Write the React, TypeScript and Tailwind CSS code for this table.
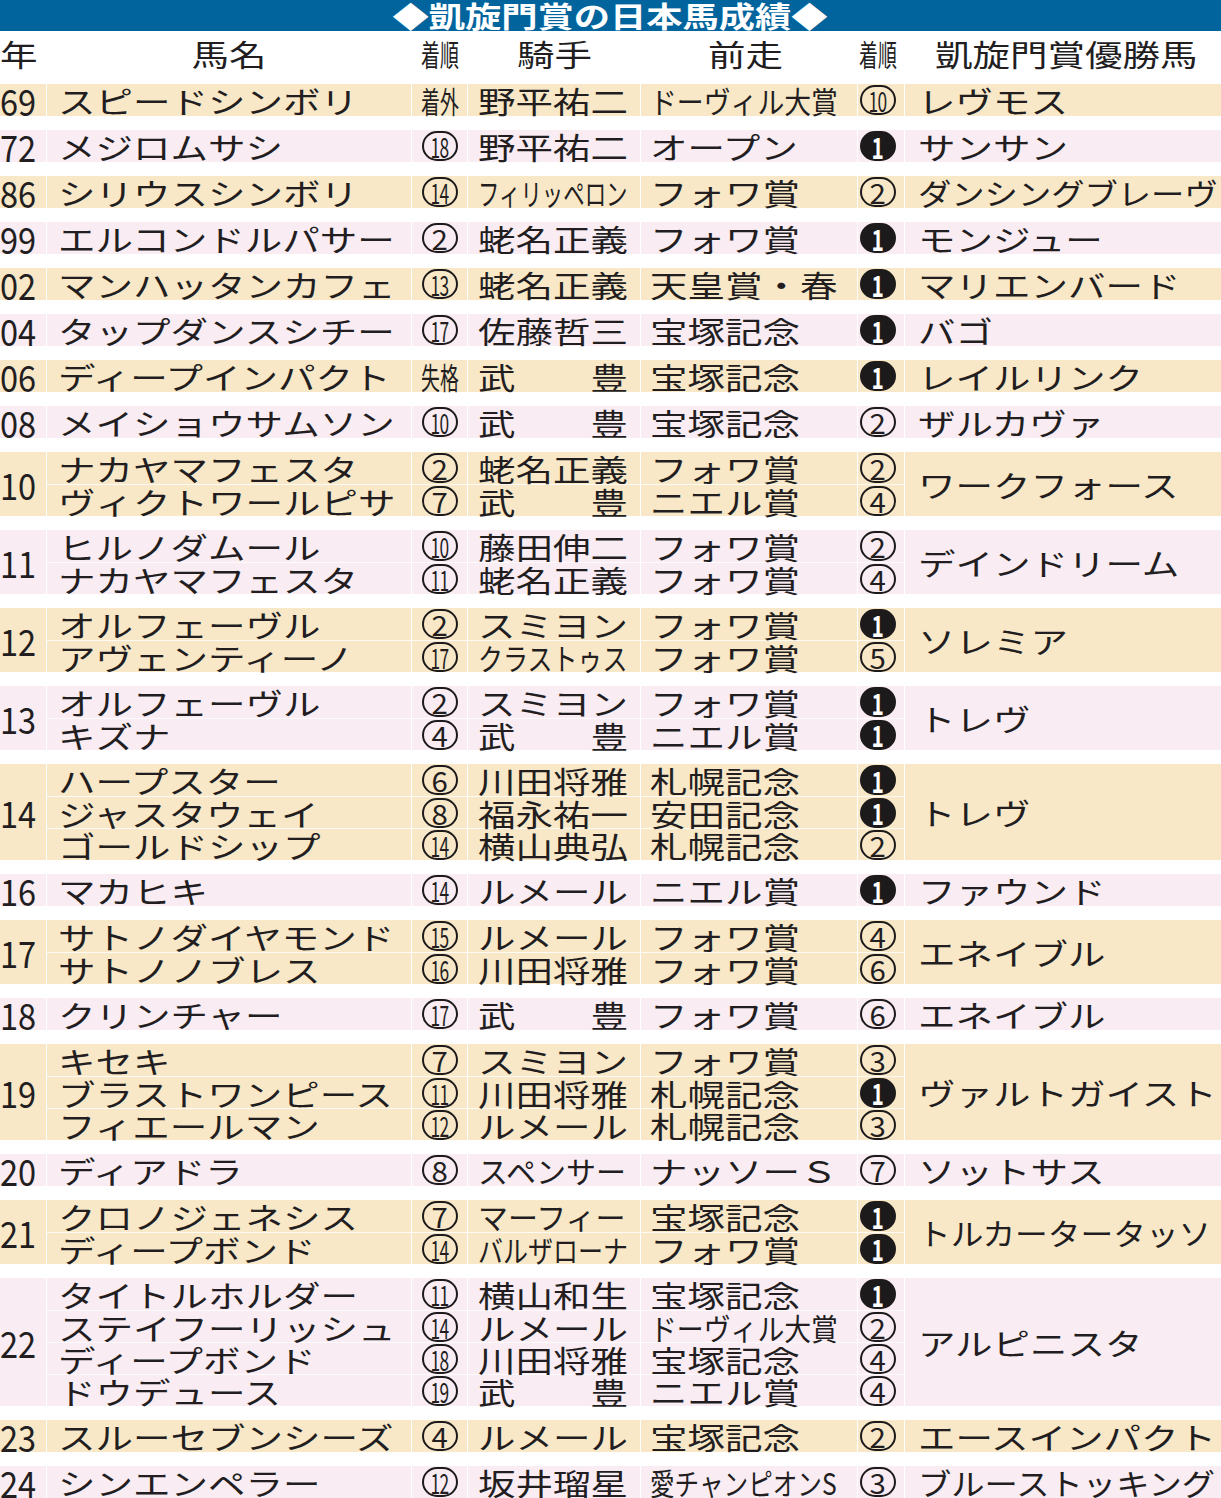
type Rank = number | 'b1' | string

interface Line {
  name: string
  rank: Rank
  jockey: string
  prev: string
  rank2: Rank
}

interface Row {
  year: string
  lines: Line[]
  winner: string
}

const l = (name: string, rank: Rank, jockey: string, prev: string, rank2: Rank): Line => ({
  name,
  rank,
  jockey,
  prev,
  rank2,
})

const ROWS: Row[] = [
  { year: '69', lines: [l('スピードシンボリ', '着外', '野平祐二', 'ドーヴィル大賞', 10)], winner: 'レヴモス' },
  { year: '72', lines: [l('メジロムサシ', 18, '野平祐二', 'オープン', 'b1')], winner: 'サンサン' },
  { year: '86', lines: [l('シリウスシンボリ', 14, 'フィリッペロン', 'フォワ賞', 2)], winner: 'ダンシングブレーヴ' },
  { year: '99', lines: [l('エルコンドルパサー', 2, '蛯名正義', 'フォワ賞', 'b1')], winner: 'モンジュー' },
  { year: '02', lines: [l('マンハッタンカフェ', 13, '蛯名正義', '天皇賞・春', 'b1')], winner: 'マリエンバード' },
  { year: '04', lines: [l('タップダンスシチー', 17, '佐藤哲三', '宝塚記念', 'b1')], winner: 'バゴ' },
  { year: '06', lines: [l('ディープインパクト', '失格', '武豊', '宝塚記念', 'b1')], winner: 'レイルリンク' },
  { year: '08', lines: [l('メイショウサムソン', 10, '武豊', '宝塚記念', 2)], winner: 'ザルカヴァ' },
  {
    year: '10',
    lines: [l('ナカヤマフェスタ', 2, '蛯名正義', 'フォワ賞', 2), l('ヴィクトワールピサ', 7, '武豊', 'ニエル賞', 4)],
    winner: 'ワークフォース',
  },
  {
    year: '11',
    lines: [l('ヒルノダムール', 10, '藤田伸二', 'フォワ賞', 2), l('ナカヤマフェスタ', 11, '蛯名正義', 'フォワ賞', 4)],
    winner: 'デインドリーム',
  },
  {
    year: '12',
    lines: [l('オルフェーヴル', 2, 'スミヨン', 'フォワ賞', 'b1'), l('アヴェンティーノ', 17, 'クラストゥス', 'フォワ賞', 5)],
    winner: 'ソレミア',
  },
  {
    year: '13',
    lines: [l('オルフェーヴル', 2, 'スミヨン', 'フォワ賞', 'b1'), l('キズナ', 4, '武豊', 'ニエル賞', 'b1')],
    winner: 'トレヴ',
  },
  {
    year: '14',
    lines: [
      l('ハープスター', 6, '川田将雅', '札幌記念', 'b1'),
      l('ジャスタウェイ', 8, '福永祐一', '安田記念', 'b1'),
      l('ゴールドシップ', 14, '横山典弘', '札幌記念', 2),
    ],
    winner: 'トレヴ',
  },
  { year: '16', lines: [l('マカヒキ', 14, 'ルメール', 'ニエル賞', 'b1')], winner: 'ファウンド' },
  {
    year: '17',
    lines: [l('サトノダイヤモンド', 15, 'ルメール', 'フォワ賞', 4), l('サトノノブレス', 16, '川田将雅', 'フォワ賞', 6)],
    winner: 'エネイブル',
  },
  { year: '18', lines: [l('クリンチャー', 17, '武豊', 'フォワ賞', 6)], winner: 'エネイブル' },
  {
    year: '19',
    lines: [
      l('キセキ', 7, 'スミヨン', 'フォワ賞', 3),
      l('ブラストワンピース', 11, '川田将雅', '札幌記念', 'b1'),
      l('フィエールマン', 12, 'ルメール', '札幌記念', 3),
    ],
    winner: 'ヴァルトガイスト',
  },
  { year: '20', lines: [l('ディアドラ', 8, 'スペンサー', 'ナッソーＳ', 7)], winner: 'ソットサス' },
  {
    year: '21',
    lines: [l('クロノジェネシス', 7, 'マーフィー', '宝塚記念', 'b1'), l('ディープボンド', 14, 'バルザローナ', 'フォワ賞', 'b1')],
    winner: 'トルカータータッソ',
  },
  {
    year: '22',
    lines: [
      l('タイトルホルダー', 11, '横山和生', '宝塚記念', 'b1'),
      l('ステイフーリッシュ', 14, 'ルメール', 'ドーヴィル大賞', 2),
      l('ディープボンド', 18, '川田将雅', '宝塚記念', 4),
      l('ドウデュース', 19, '武豊', 'ニエル賞', 4),
    ],
    winner: 'アルピニスタ',
  },
  { year: '23', lines: [l('スルーセブンシーズ', 4, 'ルメール', '宝塚記念', 2)], winner: 'エースインパクト' },
  { year: '24', lines: [l('シンエンペラー', 12, '坂井瑠星', '愛チャンピオンS', 3)], winner: 'ブルーストッキング' },
]

// 紙面で字詰めされている項目
const JOCKEY_SCALE: Record<string, string> = {
  フィリッペロン: 'scale-x-[0.714]',
  クラストゥス: 'scale-x-[0.833]',
  バルザローナ: 'scale-x-[0.833]',
  スペンサー: 'scale-x-[1]',
  マーフィー: 'scale-x-[1]',
}

const PREV_SCALE: Record<string, string> = {
  ドーヴィル大賞: 'scale-x-[0.895]',
  愛チャンピオンS: 'scale-x-[0.82]',
}

const WINNER_SCALE: Record<string, string> = {
  ダンシングブレーヴ: 'scale-x-[1.11]',
  トルカータータッソ: 'scale-x-[1.09]',
  ブルーストッキング: 'scale-x-[1.11]',
}

const COLS = 'grid grid-cols-[46px_364px_55px_172px_216px_46px_1fr] gap-x-px'
const FONT = "font-['Noto_Sans_CJK_JP','Noto_Sans',sans-serif]"

function Wide({
  children,
  scale = 'scale-x-[1.25]',
  origin = 'origin-left',
  className = '',
}: {
  children: React.ReactNode
  scale?: string
  origin?: string
  className?: string
}) {
  return <span className={`inline-block whitespace-nowrap ${origin} ${scale} ${className}`}>{children}</span>
}

function Mark({ rank }: { rank: Rank }) {
  if (rank === 'b1') {
    return (
      <span className="flex h-[30px] w-[36px] items-center justify-center rounded-full bg-[#1c1a1a] text-[29px] leading-none font-bold text-white">
        <span className="inline-block scale-x-[0.72]">1</span>
      </span>
    )
  }
  if (typeof rank === 'string') {
    return (
      <span className="inline-block origin-center scale-x-[0.63] text-[30px] leading-none whitespace-nowrap">{rank}</span>
    )
  }
  const two = rank >= 10
  return (
    <span className="flex h-[30px] w-[36px] items-center justify-center rounded-full border-[2px] border-[#1c1a1a] leading-none">
      {two ? (
        <span className="inline-block scale-x-[0.62] text-[28px] tracking-[-1px]">{rank}</span>
      ) : (
        <span className="inline-block scale-x-[1.05] text-[28px]">{rank}</span>
      )}
    </span>
  )
}

function sub(i: number) {
  return i > 0 ? 'border-t border-white/80' : ''
}

const LINE = 'flex h-[32px] items-center'

function TableRow({ row, bg }: { row: Row; bg: string }) {
  return (
    <div className={COLS}>
      <div className={`${bg} flex items-center overflow-hidden`}>
        <Wide scale="scale-x-[0.88]" className="text-[37px] leading-[32px]">
          {row.year}
        </Wide>
      </div>
      <div className={`${bg} flex flex-col`}>
        {row.lines.map((ln, i) => (
          <div key={i} className={`${LINE} pl-[11px] ${sub(i)}`}>
            <Wide>{ln.name}</Wide>
          </div>
        ))}
      </div>
      <div className={`${bg} flex flex-col`}>
        {row.lines.map((ln, i) => (
          <div key={i} className={`${LINE} justify-center pl-[1px] ${sub(i)}`}>
            <Mark rank={ln.rank} />
          </div>
        ))}
      </div>
      <div className={`${bg} flex flex-col`}>
        {row.lines.map((ln, i) => (
          <div key={i} className={`${LINE} pl-[10px] ${sub(i)}`}>
            {ln.jockey === '武豊' ? (
              <div className="flex w-[150px] justify-between">
                <Wide>武</Wide>
                <Wide origin="origin-right">豊</Wide>
              </div>
            ) : (
              <Wide scale={JOCKEY_SCALE[ln.jockey] ?? 'scale-x-[1.25]'}>{ln.jockey}</Wide>
            )}
          </div>
        ))}
      </div>
      <div className={`${bg} flex flex-col`}>
        {row.lines.map((ln, i) => (
          <div key={i} className={`${LINE} pl-[9px] ${sub(i)}`}>
            <Wide scale={PREV_SCALE[ln.prev] ?? 'scale-x-[1.25]'}>{ln.prev}</Wide>
          </div>
        ))}
      </div>
      <div className={`${bg} flex flex-col`}>
        {row.lines.map((ln, i) => (
          <div key={i} className={`${LINE} justify-center pr-[6px] ${sub(i)}`}>
            <Mark rank={ln.rank2} />
          </div>
        ))}
      </div>
      <div className={`${bg} flex items-center overflow-hidden pl-[13px]`}>
        <Wide scale={WINNER_SCALE[row.winner] ?? 'scale-x-[1.25]'}>{row.winner}</Wide>
      </div>
    </div>
  )
}

export default function App() {
  return (
    <div className={`h-[1498px] w-[1221px] overflow-hidden bg-white text-[30px] leading-[32px] text-[#221e1f] ${FONT}`}>
      {/* タイトル */}
      <div className="flex h-[31px] items-center justify-center overflow-hidden bg-[#02649d] text-[29px] leading-none font-bold text-white">
        <Wide origin="origin-center">◆凱旋門賞の日本馬成績◆</Wide>
      </div>

      {/* 見出し */}
      <div className={`${COLS} h-[53px] items-center pb-[9px]`}>
        <div>
          <Wide>年</Wide>
        </div>
        <div className="flex justify-center">
          <Wide origin="origin-center">馬名</Wide>
        </div>
        <div className="flex justify-center">
          <Mark rank="着順" />
        </div>
        <div className="pl-[49px]">
          <Wide>騎手</Wide>
        </div>
        <div className="pl-[67px]">
          <Wide>前走</Wide>
        </div>
        <div className="flex justify-center pr-[6px]">
          <Mark rank="着順" />
        </div>
        <div className="pl-[30px]">
          <Wide>凱旋門賞優勝馬</Wide>
        </div>
      </div>

      <div className="flex flex-col gap-[14px]">
        {ROWS.map((row, i) => (
          <TableRow key={row.year} row={row} bg={i % 2 === 0 ? 'bg-[#f9e8c8]' : 'bg-[#f9ecf3]'} />
        ))}
      </div>
    </div>
  )
}
